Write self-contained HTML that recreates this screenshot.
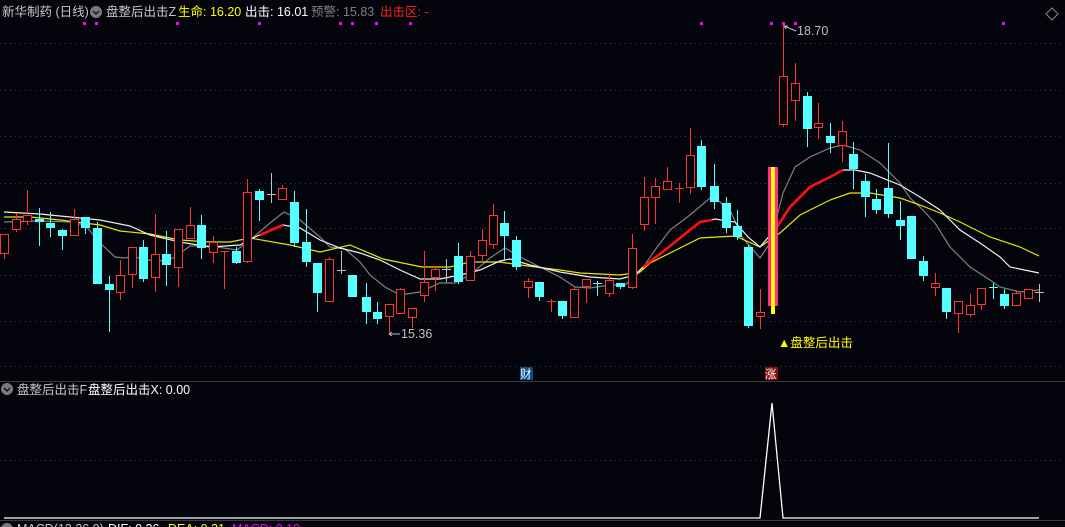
<!DOCTYPE html>
<html><head><meta charset="utf-8"><style>
html,body{margin:0;padding:0;background:#04040c;width:1065px;height:527px;overflow:hidden}
svg{display:block}
text{font-family:"Liberation Sans","Noto Sans CJK SC",sans-serif;font-size:12.5px}
</style></head><body>
<svg width="1065" height="527" viewBox="0 0 1065 527" xmlns="http://www.w3.org/2000/svg" shape-rendering="crispEdges">
<rect width="1065" height="527" fill="#04040c"/>
<g stroke="#3a3a40" stroke-dasharray="1 4">
<line x1="0" y1="43.5" x2="1065" y2="43.5"/><line x1="0" y1="90.5" x2="1065" y2="90.5"/><line x1="0" y1="136.5" x2="1065" y2="136.5"/><line x1="0" y1="183.5" x2="1065" y2="183.5"/><line x1="0" y1="228.5" x2="1065" y2="228.5"/><line x1="0" y1="275.5" x2="1065" y2="275.5"/><line x1="0" y1="321.5" x2="1065" y2="321.5"/><line x1="0" y1="366.5" x2="1065" y2="366.5"/><line x1="0" y1="460.5" x2="1065" y2="460.5"/>
</g>
<line x1="0" y1="381.5" x2="1065" y2="381.5" stroke="#3c3c3c"/>
<line x1="0" y1="520.5" x2="1065" y2="520.5" stroke="#3c3c3c"/>
<!-- header -->
<text x="2" y="16" fill="#c8c8c8">新华制药 (日线)</text>
<circle cx="96" cy="12" r="6" fill="#7a7a7a"/><path d="M93 11 L96 14 L99 11" stroke="#111" stroke-width="1.4" fill="none" shape-rendering="auto"/>
<text x="106" y="16" fill="#c8c8c8">盘整后出击Z</text>
<text x="178" y="16" fill="#ffff00">生命: 16.20</text>
<text x="245" y="16" fill="#ffffff">出击: 16.01</text>
<text x="311" y="16" fill="#808080">预警: 15.83</text>
<text x="380" y="16" fill="#ff2020">出击区: -</text>
<path d="M1052 8 L1058 14 L1052 20 L1046 14 Z" stroke="#888" fill="none" shape-rendering="auto"/>
<g fill="#ff00ff"><rect x="83" y="22" width="3" height="3"/><rect x="95" y="22" width="3" height="3"/><rect x="176" y="22" width="3" height="3"/><rect x="258" y="22" width="3" height="3"/><rect x="339" y="22" width="3" height="3"/><rect x="351" y="22" width="3" height="3"/><rect x="375" y="22" width="3" height="3"/><rect x="409" y="22" width="3" height="3"/><rect x="700" y="22" width="3" height="3"/><rect x="770" y="22" width="3" height="3"/><rect x="782" y="22" width="3" height="3"/><rect x="794" y="22" width="3" height="3"/><rect x="1002" y="22" width="3" height="3"/></g>
<!-- MAs -->
<g fill="none" shape-rendering="auto" stroke-width="1.2">
<polyline stroke="#808080" points="4,222 40,221 70,222 85,225 100,243 115,257 125,258 133,256 145,260 165,261 175,257 190,246 210,246 237,250 250,240 270,223 284,212 300,220 320,237 330,247 345,249 360,262 370,275 385,287 400,295 420,292 440,283 455,283 470,275 490,258 505,248 520,257 540,267 560,277 575,287 590,288 610,285 625,285 640,272 655,250 670,230 690,215 710,198 715,198 730,210 742,237 760,258 770,243 783,193 795,167 810,157 830,148 843,145 860,150 880,163 900,183 910,198 920,207 935,223 950,247 970,267 990,280 1000,287 1020,292 1039,290"/>
<polyline stroke="#e8e800" points="4,217 30,217 60,220 100,225 120,231 150,234 180,240 210,242 230,242 250,238 290,245 320,252 350,245 383,259 422,267 450,267 470,262 500,262 520,265 560,270 580,273 620,275 640,272 650,263 680,248 700,238 735,236 760,247 780,233 800,215 830,200 850,193 870,193 900,198 920,205 940,213 960,222 990,237 1020,247 1039,256"/>
<polyline stroke="#f0f0f0" points="4,212 40,214 70,217 100,220 130,226 150,235 180,242 210,247 240,245 257,236 260,235 283,225 300,228 320,240 340,248 360,253 380,260 400,270 420,279 440,279 460,275 480,270 500,261 510,259 530,265 560,272 590,277 620,279 635,275 643,267 680,238 700,222 715,219 735,222 748,237 760,247 777,227 790,207 810,187 830,177 843,170 855,170 870,173 900,185 920,197 940,210 960,230 980,243 1000,257 1010,267 1039,273"/>
<g stroke="#ff1010" stroke-width="2.6"><polyline points="260,235 283,225"/><polyline points="643,267 660,254 680,238 700,222 712,220"/><polyline points="777,227 790,207 810,187 830,177 843,170"/></g>
</g>
<!-- wicks -->
<path stroke="#ff3333" d="M4.5 234V259M16.5 213V232M27.5 190V225M74.5 209V235M120.5 260V300M132.5 247V288M155.5 214V292M178.5 229V287M190.5 207V238M213.5 236V263M224.5 251V289M247.5 179V263M282.5 185V199M329.5 257V301M389.5 304V333M400.5 288V314M412.5 308V328M424.5 251V302M435.5 266V291M470.5 251V280M482.5 229V263M493.5 204V249M528.5 278V298M551.5 299V312M574.5 286V317M586.5 279V303M609.5 274V297M632.5 234V289M644.5 177V231M655.5 178V224M667.5 167V189M679.5 183V203M690.5 128V194M760.5 289V329M783.5 25V127M795.5 63V121M818.5 103V139M842.5 121V162M935.5 273V296M958.5 301V333M970.5 294V317M981.5 288V310M1016.5 291V305M1028.5 289V298M220 251.5H229M547 301.5H556M675 188.5H684"/>
<path stroke="#54ffff" d="M39.5 208V246M50.5 212V237M62.5 229V250M85.5 217V234M97.5 222V284M109.5 276V332M143.5 240V282M166.5 231V286M201.5 215V259M236.5 247V264M259.5 189V221M294.5 191V247M306.5 209V267M317.5 263V312M352.5 275V297M366.5 283V324M377.5 302V324M458.5 243V284M504.5 211V260M516.5 236V270M539.5 282V301M562.5 301V319M597.5 281V296M620.5 283V289M701.5 140V190M714.5 164V209M726.5 197V233M737.5 210V240M748.5 245V328M807.5 92V147M830.5 123V153M853.5 142V189M865.5 174V217M876.5 189V214M888.5 143V218M900.5 201V240M911.5 216V259M923.5 256V281M946.5 288V319M993.5 283V299M1004.5 289V309M593 283.5H602M989 287.5H998"/>
<path stroke="#c0c0c0" d="M271.5 173V203M267 194.5H276M341.5 251V274M337 270.5H346M446.5 259V282M442 269.5H451M1039.5 284V302M1035 292.5H1044"/>
<!-- red bodies -->
<g fill="#04040c" stroke="#ff3333">
<rect x="0.5" y="234.5" width="8" height="19"/><rect x="12.5" y="219.5" width="8" height="10"/><rect x="23.5" y="215.5" width="8" height="6"/><rect x="70.5" y="219.5" width="8" height="16"/><rect x="116.5" y="275.5" width="8" height="17"/><rect x="128.5" y="247.5" width="8" height="27"/><rect x="151.5" y="254.5" width="8" height="23"/><rect x="174.5" y="229.5" width="8" height="38"/><rect x="186.5" y="225.5" width="8" height="13"/><rect x="209.5" y="242.5" width="8" height="10"/><rect x="243.5" y="192.5" width="8" height="69"/><rect x="278.5" y="188.5" width="8" height="11"/><rect x="325.5" y="259.5" width="8" height="42"/><rect x="385.5" y="304.5" width="8" height="12"/><rect x="396.5" y="289.5" width="8" height="24"/><rect x="408.5" y="308.5" width="8" height="9"/><rect x="420.5" y="282.5" width="8" height="13"/><rect x="431.5" y="269.5" width="8" height="8"/><rect x="466.5" y="256.5" width="8" height="24"/><rect x="478.5" y="240.5" width="8" height="15"/><rect x="489.5" y="215.5" width="8" height="29"/><rect x="524.5" y="281.5" width="8" height="6"/><rect x="570.5" y="289.5" width="8" height="28"/><rect x="582.5" y="279.5" width="8" height="7"/><rect x="605.5" y="280.5" width="8" height="13"/><rect x="628.5" y="248.5" width="8" height="39"/><rect x="640.5" y="197.5" width="8" height="27"/><rect x="651.5" y="186.5" width="8" height="11"/><rect x="663.5" y="181.5" width="8" height="8"/><rect x="686.5" y="155.5" width="8" height="32"/><rect x="756.5" y="312.5" width="8" height="4"/><rect x="779.5" y="76.5" width="8" height="48"/><rect x="791.5" y="83.5" width="8" height="17"/><rect x="814.5" y="123.5" width="8" height="4"/><rect x="838.5" y="131.5" width="8" height="14"/><rect x="931.5" y="283.5" width="8" height="4"/><rect x="954.5" y="301.5" width="8" height="12"/><rect x="966.5" y="305.5" width="8" height="9"/><rect x="977.5" y="288.5" width="8" height="16"/><rect x="1012.5" y="293.5" width="8" height="12"/><rect x="1024.5" y="289.5" width="8" height="9"/>
</g>
<!-- cyan bodies -->
<g fill="#54ffff">
<rect x="35" y="219" width="9" height="3"/><rect x="46" y="223" width="9" height="5"/><rect x="58" y="230" width="9" height="6"/><rect x="81" y="217" width="9" height="11"/><rect x="93" y="228" width="9" height="56"/><rect x="105" y="284" width="9" height="6"/><rect x="139" y="247" width="9" height="32"/><rect x="162" y="254" width="9" height="11"/><rect x="197" y="225" width="9" height="23"/><rect x="232" y="251" width="9" height="12"/><rect x="255" y="191" width="9" height="9"/><rect x="290" y="202" width="9" height="41"/><rect x="302" y="242" width="9" height="20"/><rect x="313" y="263" width="9" height="30"/><rect x="348" y="275" width="9" height="22"/><rect x="362" y="297" width="9" height="15"/><rect x="373" y="312" width="9" height="7"/><rect x="454" y="256" width="9" height="26"/><rect x="500" y="223" width="9" height="13"/><rect x="512" y="240" width="9" height="27"/><rect x="535" y="282" width="9" height="15"/><rect x="558" y="301" width="9" height="15"/><rect x="616" y="283" width="9" height="4"/><rect x="697" y="146" width="9" height="41"/><rect x="710" y="186" width="9" height="16"/><rect x="722" y="203" width="9" height="25"/><rect x="733" y="226" width="9" height="11"/><rect x="744" y="247" width="9" height="79"/><rect x="803" y="96" width="9" height="33"/><rect x="826" y="136" width="9" height="7"/><rect x="849" y="154" width="9" height="15"/><rect x="861" y="181" width="9" height="16"/><rect x="872" y="199" width="9" height="11"/><rect x="884" y="188" width="9" height="26"/><rect x="896" y="220" width="9" height="6"/><rect x="907" y="216" width="9" height="43"/><rect x="919" y="261" width="9" height="15"/><rect x="942" y="288" width="9" height="24"/><rect x="1000" y="294" width="9" height="12"/>
</g>
<!-- signal bar -->
<rect x="768" y="167" width="10" height="139" fill="#ff2f8c"/>
<rect x="771" y="167" width="4" height="147" fill="#ffff00"/>
<!-- labels -->
<path d="M784 26 L796 31 M784 26 l4 0 M784 26 l2 3" stroke="#c0c0c0" fill="none" shape-rendering="auto"/>
<text x="797" y="35" fill="#c0c0c0">18.70</text>
<path d="M389 334 H400 M389 334 l3 -2 M389 334 l3 2" stroke="#c0c0c0" fill="none" shape-rendering="auto"/>
<text x="401" y="338" fill="#c0c0c0">15.36</text>
<text x="778" y="347" fill="#ffff00">▲盘整后出击</text>
<rect x="520" y="367" width="13" height="13" fill="#0c4a8a"/><text x="520" y="378" fill="#ffffff" style="font-size:11.5px">财</text>
<rect x="765" y="367" width="13" height="13" fill="#8a0c0c"/><text x="765" y="378" fill="#ffffff" style="font-size:11.5px">涨</text>
<!-- sub panel -->
<circle cx="7" cy="389" r="6" fill="#7a7a7a"/><path d="M4 388 L7 391 L10 388" stroke="#111" stroke-width="1.4" fill="none" shape-rendering="auto"/>
<text x="17" y="394" fill="#c8c8c8">盘整后出击F</text>
<text x="88" y="394" fill="#ffffff">盘整后出击X: 0.00</text>
<polyline points="4,518 760,518 772,403 783,518 1039,518" stroke="#ffffff" stroke-width="1.3" fill="none" shape-rendering="auto"/>
<circle cx="7" cy="529" r="6" fill="#7a7a7a"/>
<text x="17" y="533" fill="#c8c8c8">MACD(12,26,9)</text>
<text x="108" y="533" fill="#ffffff">DIF: 0.36</text>
<text x="168" y="533" fill="#ffff00">DEA: 0.31</text>
<text x="232" y="533" fill="#ff00ff">MACD: 0.10</text>
</svg>
</body></html>
